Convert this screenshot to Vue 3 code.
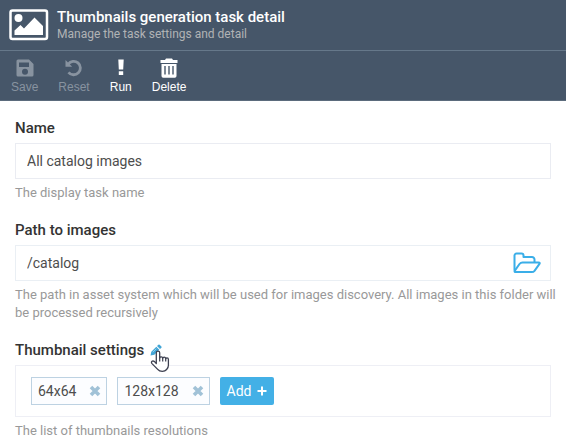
<script setup>
import { ref } from 'vue'

const name = ref('All catalog images')
const path = ref('/catalog')
const sizes = ref(['64x64', '128x128'])

function removeSize(index) {
  sizes.value.splice(index, 1)
}
</script>

<template>
  <div class="blade">
    <header class="header">
      <svg class="header-icon" viewBox="0 0 40 32" aria-hidden="true">
        <rect x="1.500" y="1.500" width="36.500" height="28.500" rx="2" fill="none" stroke="#fff" stroke-width="2.500" />
        <circle cx="9.500" cy="9" r="4" fill="#fff" />
        <path d="M5.500 26v-4.500l6-5.500 3.500 3.500L25.500 8.500 34 17v9z" fill="#fff" />
      </svg>
      <div>
        <h1 class="title">Thumbnails generation task detail</h1>
        <p class="subtitle">Manage the task settings and detail</p>
      </div>
    </header>

    <nav class="toolbar">
      <button type="button" class="tool" disabled>
        <svg viewBox="0 0 20 20" aria-hidden="true">
          <path fill="currentColor" fill-rule="evenodd" d="M3 1.500h11l4.500 4.500V17a1.500 1.500 0 0 1-1.500 1.500H3A1.500 1.500 0 0 1 1.500 17V3A1.500 1.500 0 0 1 3 1.500zM4 4.500v4.500h10V4.500zM10 10.700a3 3 0 1 0 0 6 3 3 0 0 0 0-6z" />
        </svg>
        Save
      </button>
      <button type="button" class="tool" disabled>
        <svg viewBox="0 0 20 20" aria-hidden="true">
          <path d="M4.200 6.200A6.700 6.700 0 1 1 4.500 14.300" fill="none" stroke="currentColor" stroke-width="2.800" />
          <path d="M1.500 2v6.700h6.700z" fill="currentColor" />
        </svg>
        Reset
      </button>
      <button type="button" class="tool">
        <svg viewBox="0 0 20 20" aria-hidden="true">
          <path d="M7.300 1.500h5.400L12.200 11.500H7.800zM7.800 13.200h4.400v3.800H7.800z" fill="currentColor" />
        </svg>
        Run
      </button>
      <button type="button" class="tool">
        <svg viewBox="0 0 20 20" aria-hidden="true">
          <path fill="currentColor" fill-rule="evenodd" d="M7 .5h6l1 1.500h4.500v3h-17V2H6zM2.500 6h15v12a1.700 1.700 0 0 1-1.700 1.700H4.200A1.700 1.700 0 0 1 2.500 18zM5.300 8v8.500h1.400V8zM9.300 8v8.500h1.400V8zM13.300 8v8.500h1.400V8z" />
        </svg>
        Delete
      </button>
    </nav>

    <form class="form" @submit.prevent>
      <div class="field">
        <label class="label" for="task-name">Name</label>
        <input id="task-name" v-model="name" class="input" type="text" />
        <p class="help">The display task name</p>
      </div>

      <div class="field">
        <label class="label" for="task-path">Path to images</label>
        <div class="input-group">
          <input id="task-path" v-model="path" class="input bare" type="text" />
          <button type="button" class="browse" aria-label="Browse folders">
            <svg viewBox="0 0 28 22" fill="none" stroke="#3aaee8" stroke-width="2" stroke-linejoin="round" aria-hidden="true">
              <path d="M1.500 18.500V3.500a2 2 0 0 1 2-2h5a2 2 0 0 1 2 2V5H19a2.500 2.500 0 0 1 2.500 2.500V10" />
              <path d="M9.500 10.500H25.500q2 0 .8 1.700L21.500 18.800q-1 1.300-2.700 1.300H3q-2.200 0-1-1.700L6.500 12q1.200-1.500 3-1.500z" />
            </svg>
          </button>
        </div>
        <p class="help">The path in asset system which will be used for images discovery. All images in this folder will be processed recursively</p>
      </div>

      <div class="field">
        <div class="label label-row">
          <span id="sizes-label">Thumbnail settings</span>
          <button type="button" class="edit" aria-label="Edit thumbnail settings">
            <svg class="pencil" viewBox="0 0 12 12" aria-hidden="true">
              <path d="M.5 11.500l.8-3.700L6.300 2.800l3 3-5 5z" fill="#41a5d6" />
              <path d="M7 2.100L8.400.7q.6-.5 1.200 0l1.800 1.800q.5.600 0 1.200L10 5.100z" fill="#41a5d6" />
              <path d="M2.800 8.200l3.500-3.500" stroke="#b5dcef" stroke-width=".7" />
            </svg>
            <svg class="pointer" viewBox="0 0 20 23" aria-hidden="true">
              <path d="M6.300 13.500V2.800a1.700 1.700 0 0 1 3.400 0V8q0-1.200 1.500-1.200T12.700 8.200q.2-1 1.500-1t1.500 1.500q.3-.9 1.300-.9 1.400 0 1.400 1.700v5.700q0 2.500-1.800 4.300-1.500 1.900-4.300 1.900-3 0-4.600-2L2 13.600q-1.100-1.500 0-2.300t2.500.3z" fill="#fff" stroke="#3d4050" stroke-width="1.300" stroke-linejoin="round" />
              <path d="M9.700 7.500v4M12.700 8v3.500M15.700 8.500v3" fill="none" stroke="#3d4050" stroke-width="1.200" />
            </svg>
          </button>
        </div>
        <div class="sizes" role="group" aria-labelledby="sizes-label">
          <span v-for="(size, index) in sizes" :key="size" class="tag">
            {{ size }}
            <button type="button" class="remove" :aria-label="'Remove ' + size" @click="removeSize(index)">
              <svg viewBox="0 0 12 12" aria-hidden="true">
                <path d="M2 2l8 8M10 2l-8 8" stroke="#a1c2d7" stroke-width="3.600" />
              </svg>
            </button>
          </span>
          <button type="button" class="add">
            Add
            <svg viewBox="0 0 10 10" aria-hidden="true">
              <path d="M5 .5v9M.5 5h9" stroke="#fff" stroke-width="2" />
            </svg>
          </button>
        </div>
        <p class="help">The list of thumbnails resolutions</p>
      </div>
    </form>
  </div>
</template>

<style>
body {
  margin: 0;
  background: #fff;
}
</style>

<style scoped>
.blade {
  font-family: Roboto, "Liberation Sans", sans-serif;
  font-size: 14px;
  line-height: 18px;
  color: #333;
}

button {
  margin: 0;
  padding: 0;
  border: 0;
  background: none;
  font: inherit;
  color: inherit;
  cursor: pointer;
}

svg {
  display: block;
}

.header {
  display: flex;
  align-items: center;
  gap: 8px;
  box-sizing: border-box;
  height: 50px;
  padding: 0 9px;
  background: #465669;
}

.header-icon {
  width: 40px;
  height: 32px;
}

.title {
  margin: 0;
  font-size: 15px;
  font-weight: 500;
  line-height: 18px;
  color: #fff;
}

.subtitle {
  margin: 0;
  font-size: 12px;
  line-height: 16px;
  color: #b1b3b5;
}

.toolbar {
  display: flex;
  gap: 20px;
  box-sizing: border-box;
  height: 51px;
  padding: 7px 11px 0;
  border-top: 1px solid #66788a;
  border-bottom: 1px solid #5b6b7c;
  background: #465669;
}

.tool {
  display: flex;
  flex-direction: column;
  align-items: center;
  gap: 1px;
  font-family: "Liberation Sans", Arial, sans-serif;
  font-size: 12px;
  line-height: 16px;
  color: #fff;
}

.tool:disabled {
  color: #8893a0;
  cursor: default;
}

.tool svg {
  width: 20px;
  height: 20px;
}

.form {
  display: flex;
  flex-direction: column;
  gap: 19px;
  padding: 18px 15px 9px;
}

.label {
  display: block;
  margin-bottom: 6px;
  font-size: 15px;
  font-weight: 500;
}

.label-row {
  display: flex;
  align-items: center;
  gap: 6px;
}

.input {
  display: block;
  box-sizing: border-box;
  width: 100%;
  height: 36px;
  padding: 0 11px;
  border: 1px solid #eaecf2;
  background: #fff;
  font: inherit;
  color: #4d4d4d;
  outline: 0;
}

.input-group {
  display: flex;
  align-items: center;
  box-sizing: border-box;
  height: 36px;
  padding-right: 9px;
  border: 1px solid #eaeff4;
}

.bare {
  flex: 1;
  min-width: 0;
  height: 34px;
  border: 0;
}

.browse svg {
  width: 28px;
  height: 22px;
}

.help {
  margin: 5px -10px 0 0;
  font-size: 13px;
  color: #999;
}

.edit {
  position: relative;
}

.pencil {
  width: 12px;
  height: 12px;
}

.pointer {
  position: absolute;
  top: 6px;
  left: 0;
  width: 20px;
  height: 23px;
}

.sizes {
  display: flex;
  flex-wrap: wrap;
  gap: 10px;
  padding: 11px 15px;
  border: 1px solid #eeeff5;
}

.tag {
  display: flex;
  align-items: center;
  gap: 13px;
  box-sizing: border-box;
  height: 28px;
  padding: 0 5px 0 6px;
  border: 1px solid #bdd2e2;
  background: #fcfdff;
  color: #4d4d4d;
}

.remove svg {
  width: 12px;
  height: 12px;
}

.add {
  display: flex;
  align-items: center;
  gap: 5px;
  height: 28px;
  padding: 0 7px;
  border-radius: 2px;
  background: #43b0e6;
  color: #fff;
}

.add svg {
  width: 10px;
  height: 10px;
}
</style>
